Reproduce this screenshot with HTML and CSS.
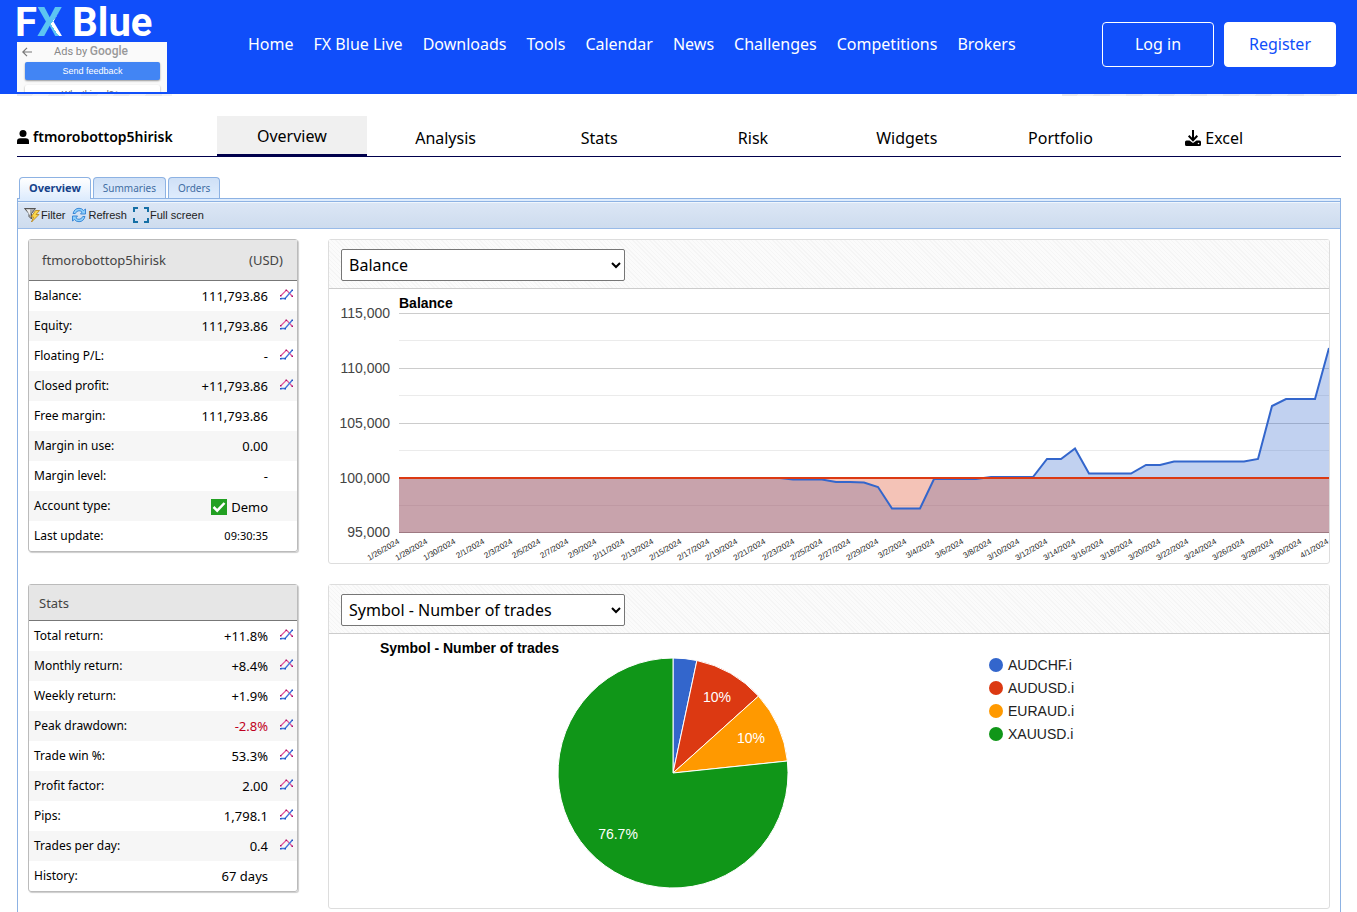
FILE: index.html
```html
<!DOCTYPE html>
<html lang="en">
<head>
<meta charset="utf-8">
<title>ftmorobottop5hirisk - FX Blue</title>
<link rel="stylesheet" href="styles.css">
</head>
<body>
<svg class="defs" aria-hidden="true">
  <symbol id="spark" viewBox="0 0 13 11">
    <path d="M1 6.500L6 1.500H7L12 7" fill="none" stroke="#e0559c" stroke-width="1.200"/>
    <path d="M1 9.500H5L12 1.500" fill="none" stroke="#3f74de" stroke-width="1.300"/>
    <path d="M0 6h1.500v1.500H0zM5.500 .5h1.500v1.500H5.500zM11.500 6.500h1.500v1.500h-1.500z" fill="#b0106a"/>
    <path d="M0 9h1.500v1.500H0zM4.500 9h1.500v1.500H4.500zM11.500 .5h1.500v1.500h-1.500z" fill="#1f4fc0"/>
  </symbol>
</svg>

<header class="site-header">
  <div class="brand">
    <a class="logo" href="#">F<span class="logo-x">X</span> Blue</a>
    <div class="ad">
      <div class="ad-head">
        <svg class="ad-back" viewBox="0 0 10 10" width="10" height="10"><path d="M10 5H1M5 .8L.8 5L5 9.200" fill="none" stroke="#777" stroke-width="1.200"/></svg>
        <span>Ads by <b>Google</b></span>
      </div>
      <button class="ad-send">Send feedback</button>
      <button class="ad-why">Why this ad? ▷</button>
    </div>
  </div>
  <nav class="main-nav">
    <a href="#">Home</a><a href="#">FX Blue Live</a><a href="#">Downloads</a><a href="#">Tools</a><a href="#">Calendar</a><a href="#">News</a><a href="#">Challenges</a><a href="#">Competitions</a><a href="#">Brokers</a>
  </nav>
  <div class="account">
    <a class="btn" href="#">Log in</a>
    <a class="btn btn-solid" href="#">Register</a>
  </div>
</header>
<div class="ad-edges"><span class="edge edge-left"></span><span class="edge edge-right"></span></div>

<main class="page">
  <div class="user-bar">
    <div class="user">
      <svg viewBox="0 0 12 14" width="12" height="14"><circle cx="6" cy="3.500" r="3.500"/><path d="M0 14v-2.500Q0 8.300 3.300 8.300H8.700Q12 8.300 12 11.500V14z"/></svg>
      <span>ftmorobottop5hirisk</span>
    </div>
    <nav class="sections">
      <a class="active" href="#">Overview</a><a href="#">Analysis</a><a href="#">Stats</a><a href="#">Risk</a><a href="#">Widgets</a><a href="#">Portfolio</a>
      <a href="#"><svg viewBox="0 0 16 16" width="16" height="16"><path d="M8 0V10M3.700 5.800L8 10.200L12.300 5.800" fill="none" stroke="#000" stroke-width="2"/><path d="M1.500 10.500H4.500L8 13L11.500 10.500H14.500Q16 10.500 16 12V14.500Q16 16 14.500 16H1.500Q0 16 0 14.500V12Q0 10.500 1.500 10.500z"/><circle cx="13.500" cy="13.500" r=".8" fill="#fff"/></svg> Excel</a>
    </nav>
  </div>

  <div class="tabs" role="tablist">
    <button class="tab tab-on" role="tab" aria-selected="true">Overview</button>
    <button class="tab" role="tab">Summaries</button>
    <button class="tab" role="tab">Orders</button>
  </div>
  <div class="frame">
    <div class="strip"></div>
    <div class="toolbar">
      <button class="tool"><svg viewBox="0 0 16 16" width="16" height="16"><path d="M.5 1.500H11.500L7.500 6.500V12L5 9.500V6.500z" fill="#aaa" stroke="#555"/><path d="M2.500 2.500H6L6 8.500z" fill="#eee"/><path d="M11.500 3.500H15.500L12 7.500H15L7.500 15L9.500 10H7z" fill="#fbd84b" stroke="#b27d12" stroke-width=".8"/></svg>Filter</button>
      <button class="tool"><svg viewBox="0 0 16 16" width="16" height="16"><g fill="#8fd0fb" stroke="#2f7fd2" stroke-width=".9"><path d="M2 6.500Q3.500 1.300 8 1.300Q11 1.300 12.500 3.500L14.500 2V7H9.500L11 5.200Q9.800 3.700 8 3.700Q5.500 3.700 4.300 6.500z"/><path d="M14 9.500Q12.500 14.700 8 14.700Q5 14.700 3.500 12.500L1.500 14V9H6.500L5 10.800Q6.200 12.300 8 12.300Q10.500 12.300 11.700 9.500z"/></g></svg>Refresh</button>
      <button class="tool"><svg viewBox="0 0 16 16" width="16" height="16"><path d="M1 5V1H5M11 1H15V5M15 11V15H11M5 15H1V11" fill="none" stroke="#156fa5" stroke-width="2"/></svg>Full screen</button>
    </div>
    <div class="content">
      <aside class="side">
        <section class="card">
          <h2 class="card-head card-head-account"><span>ftmorobottop5hirisk</span><span>(USD)</span></h2>
          <table class="facts">
            <tr><th scope="row">Balance:</th><td>111,793.86</td><td class="ic"><svg><use href="#spark"/></svg></td></tr>
            <tr><th scope="row">Equity:</th><td>111,793.86</td><td class="ic"><svg><use href="#spark"/></svg></td></tr>
            <tr><th scope="row">Floating P/L:</th><td>-</td><td class="ic"><svg><use href="#spark"/></svg></td></tr>
            <tr><th scope="row">Closed profit:</th><td>+11,793.86</td><td class="ic"><svg><use href="#spark"/></svg></td></tr>
            <tr><th scope="row">Free margin:</th><td>111,793.86</td><td class="ic"></td></tr>
            <tr><th scope="row">Margin in use:</th><td>0.00</td><td class="ic"></td></tr>
            <tr><th scope="row">Margin level:</th><td>-</td><td class="ic"></td></tr>
            <tr><th scope="row">Account type:</th><td><span class="verified"><svg viewBox="0 0 16 16" width="16" height="16"><path d="M0 0H16V16H0z" fill="#22a022"/><path d="M2.500 8L6.200 11.700L13.500 4" fill="none" stroke="#fff" stroke-width="2.500"/></svg>Demo</span></td><td class="ic"></td></tr>
            <tr><th scope="row">Last update:</th><td class="time">09:30:35</td><td class="ic"></td></tr>
          </table>
        </section>
        <section class="card">
          <h2 class="card-head">Stats</h2>
          <table class="facts">
            <tr><th scope="row">Total return:</th><td>+11.8%</td><td class="ic"><svg><use href="#spark"/></svg></td></tr>
            <tr><th scope="row">Monthly return:</th><td>+8.4%</td><td class="ic"><svg><use href="#spark"/></svg></td></tr>
            <tr><th scope="row">Weekly return:</th><td>+1.9%</td><td class="ic"><svg><use href="#spark"/></svg></td></tr>
            <tr><th scope="row">Peak drawdown:</th><td class="neg">-2.8%</td><td class="ic"><svg><use href="#spark"/></svg></td></tr>
            <tr><th scope="row">Trade win %:</th><td>53.3%</td><td class="ic"><svg><use href="#spark"/></svg></td></tr>
            <tr><th scope="row">Profit factor:</th><td>2.00</td><td class="ic"><svg><use href="#spark"/></svg></td></tr>
            <tr><th scope="row">Pips:</th><td>1,798.1</td><td class="ic"><svg><use href="#spark"/></svg></td></tr>
            <tr><th scope="row">Trades per day:</th><td>0.4</td><td class="ic"><svg><use href="#spark"/></svg></td></tr>
            <tr><th scope="row">History:</th><td>67 days</td><td class="ic"></td></tr>
          </table>
        </section>
      </aside>

      <div class="charts">
        <section class="panel">
          <div class="panel-head"><select aria-label="First chart"><option>Balance</option></select></div>
          <svg class="chart" viewBox="329 289 1000 274" role="img" aria-label="Balance">
            <text class="title" x="399" y="308">Balance</text>
            <g class="minor"><path d="M399 340.500H1329M399 395.500H1329M399 450.500H1329M399 505.500H1329"/></g>
            <g class="major"><path d="M399 313.500H1329M399 368.500H1329M399 423.500H1329M399 477.500H1329"/></g>
            <path d="M399 532.500H1329" stroke="#aaa"/>
            <path fill="#3366cc" fill-opacity=".3" d="M399 533V478H780L793 479.500H822L836 482H850L864 482.500L878 487L892 508.500H920L934 479H976L991 477H1033L1047 459H1061L1075 448.500L1089 473.500H1131L1146 465H1160L1174 461.500H1244L1258 459L1272 406L1286 399H1315L1329 348V533z"/>
            <path fill="#dc3912" fill-opacity=".3" d="M399 477.500H1329V533H399z"/>
            <path class="series" stroke="#3366cc" d="M399 478H780L793 479.500H822L836 482H850L864 482.500L878 487L892 508.500H920L934 479H976L991 477H1033L1047 459H1061L1075 448.500L1089 473.500H1131L1146 465H1160L1174 461.500H1244L1258 459L1272 406L1286 399H1315L1329 348"/>
            <path class="series" stroke="#dc3912" d="M399 478H1329"/>
            <g class="axis-y"><text x="390" y="318">115,000</text><text x="390" y="373">110,000</text><text x="390" y="428">105,000</text><text x="390" y="483">100,000</text><text x="390" y="537">95,000</text></g>
            <g class="axis-x">
              <text transform="translate(400 543) rotate(-30)">1/26/2024</text>
              <text transform="translate(428 543) rotate(-30)">1/28/2024</text>
              <text transform="translate(456 543) rotate(-30)">1/30/2024</text>
              <text transform="translate(485 543) rotate(-30)">2/1/2024</text>
              <text transform="translate(513 543) rotate(-30)">2/3/2024</text>
              <text transform="translate(541 543) rotate(-30)">2/5/2024</text>
              <text transform="translate(569 543) rotate(-30)">2/7/2024</text>
              <text transform="translate(597 543) rotate(-30)">2/9/2024</text>
              <text transform="translate(625 543) rotate(-30)">2/11/2024</text>
              <text transform="translate(654 543) rotate(-30)">2/13/2024</text>
              <text transform="translate(682 543) rotate(-30)">2/15/2024</text>
              <text transform="translate(710 543) rotate(-30)">2/17/2024</text>
              <text transform="translate(738 543) rotate(-30)">2/19/2024</text>
              <text transform="translate(766 543) rotate(-30)">2/21/2024</text>
              <text transform="translate(795 543) rotate(-30)">2/23/2024</text>
              <text transform="translate(823 543) rotate(-30)">2/25/2024</text>
              <text transform="translate(851 543) rotate(-30)">2/27/2024</text>
              <text transform="translate(879 543) rotate(-30)">2/29/2024</text>
              <text transform="translate(907 543) rotate(-30)">3/2/2024</text>
              <text transform="translate(935 543) rotate(-30)">3/4/2024</text>
              <text transform="translate(964 543) rotate(-30)">3/6/2024</text>
              <text transform="translate(992 543) rotate(-30)">3/8/2024</text>
              <text transform="translate(1020 543) rotate(-30)">3/10/2024</text>
              <text transform="translate(1048 543) rotate(-30)">3/12/2024</text>
              <text transform="translate(1076 543) rotate(-30)">3/14/2024</text>
              <text transform="translate(1104 543) rotate(-30)">3/16/2024</text>
              <text transform="translate(1133 543) rotate(-30)">3/18/2024</text>
              <text transform="translate(1161 543) rotate(-30)">3/20/2024</text>
              <text transform="translate(1189 543) rotate(-30)">3/22/2024</text>
              <text transform="translate(1217 543) rotate(-30)">3/24/2024</text>
              <text transform="translate(1245 543) rotate(-30)">3/26/2024</text>
              <text transform="translate(1274 543) rotate(-30)">3/28/2024</text>
              <text transform="translate(1302 543) rotate(-30)">3/30/2024</text>
              <text transform="translate(1329 543) rotate(-30)">4/1/2024</text>
            </g>
          </svg>
        </section>
        <section class="panel">
          <div class="panel-head"><select aria-label="Second chart"><option>Symbol - Number of trades</option></select></div>
          <svg class="chart" viewBox="329 634 1000 274" role="img" aria-label="Symbol - Number of trades">
            <text class="title" x="380" y="653">Symbol - Number of trades</text>
            <g stroke="#fff">
              <path fill="#3366cc" d="M673 773V658A115 115 0 0 1 696.900 660.500z"/>
              <path fill="#dc3912" d="M673 773L696.900 660.500A115 115 0 0 1 758.500 696.100z"/>
              <path fill="#ff9900" d="M673 773L758.500 696.100A115 115 0 0 1 787.400 761z"/>
              <path fill="#109618" d="M673 773L787.400 761A115 115 0 1 1 673 658z"/>
            </g>
            <g class="slice"><text x="717" y="702">10%</text><text x="751" y="743">10%</text><text x="618" y="839">76.7%</text></g>
            <circle cx="996" cy="665" r="7" fill="#3366cc"/><circle cx="996" cy="688" r="7" fill="#dc3912"/><circle cx="996" cy="711" r="7" fill="#ff9900"/><circle cx="996" cy="734" r="7" fill="#109618"/>
            <g class="legend"><text x="1008" y="670">AUDCHF.i</text><text x="1008" y="693">AUDUSD.i</text><text x="1008" y="716">EURAUD.i</text><text x="1008" y="739">XAUUSD.i</text></g>
          </svg>
        </section>
      </div>
    </div>
  </div>
</main>
</body>
</html>
```
FILE: styles.css
```css
* { box-sizing: border-box; }
body {
  margin: 0;
  min-height: 100vh;
  display: flex;
  flex-direction: column;
  font-family: "Noto Sans", sans-serif;
  font-size: 16px;
  color: #000;
  background: #fff;
}
a { color: inherit; text-decoration: none; }
button { font: inherit; border: 0; background: none; padding: 0; }
.defs { display: none; }

/* Header */
.site-header {
  height: 94px;
  padding: 0 21px 0 17px;
  display: flex;
  background: #104efa;
  color: #fff;
}
.brand { width: 150px; display: flex; flex-direction: column; }
.logo { margin-left: -2px; font: bold 40px/46px Roboto, sans-serif; height: 42px; white-space: nowrap; }
.logo-x {
  background: conic-gradient(from 35deg at 55% 54%, #fff 110deg, #5cc5f2 110deg);
  -webkit-background-clip: text;
  background-clip: text;
  color: transparent;
}
.ad {
  height: 50px;
  padding: 0 7px 0 8px;
  overflow: hidden;
  background: #fafafa;
  color: #888;
  font: 11px/18px Roboto, sans-serif;
}
.ad-head { display: flex; align-items: center; gap: 22px; margin-left: -3px; height: 19px; }
.ad-head b { font-weight: 500; color: #999; font-size: 12px; }
.ad-send, .ad-why {
  display: block;
  width: 100%;
  height: 18px;
  margin-top: 1px;
  border-radius: 2px;
  box-shadow: 0 1px 2px rgba(0, 0, 0, .4);
  font: 9px/18px "Liberation Sans", sans-serif;
}
.ad-send { background: #4285f4; color: #fff; }
.ad-why { margin-top: 5px; background: #fff; color: #666; }
.main-nav { display: flex; align-items: center; gap: 20px; margin-left: 81px; height: 88px; white-space: nowrap; }
.account { display: flex; gap: 10px; margin: 22px 0 0 auto; }
.btn {
  width: 112px;
  height: 45px;
  display: flex;
  align-items: center;
  justify-content: center;
  padding-bottom: 1px;
  border: 1px solid #fff;
  border-radius: 4px;
}
.btn-solid { background: #fff; color: #104efa; }
.ad-edges { display: flex; justify-content: space-between; height: 2px; padding: 0 17px; }
.edge { background: repeating-linear-gradient(120deg, #e8e8ec 0 14px, #f2f2f4 14px 28px); }
.edge-left { width: 155px; }
.edge-right { width: 278px; }

/* Account sections */
.page { flex: 1; display: flex; flex-direction: column; padding: 20px 16px 0 17px; }
.user-bar {
  display: grid;
  grid-template-columns: 200px 1fr 52px;
  height: 41px;
  border-bottom: 1px solid #00004c;
}
.user { display: flex; align-items: center; gap: 4px; font-size: 14px; font-weight: 600; }
.sections { display: flex; gap: 4px; height: 41px; }
.sections a { flex: 1; display: flex; align-items: center; justify-content: center; gap: 4px; padding-top: 3px; }
.sections .active { padding-top: 1px; background: #f0f0f0; border-bottom: 3px solid #00004c; }

/* Tab strip */
.tabs { display: flex; gap: 2px; padding: 20px 2px 0; }
.tab {
  height: 21px;
  padding: 0 9px;
  border: 1px solid #8db2e3;
  border-bottom: 0;
  border-radius: 4px 4px 0 0;
  background: linear-gradient(#cfe0f6, #dfecfd);
  color: #416da3;
  font-size: 10px;
  line-height: 20px;
}
.tab-on {
  position: relative;
  height: 22px;
  margin-bottom: -1px;
  padding-bottom: 1px;
  background: linear-gradient(#fff, #deecfd);
  color: #15428b;
  font-size: 11px;
  font-weight: bold;
}
.frame { flex: 1; border: 1px solid #8db2e3; border-bottom: 0; }
.strip { height: 3px; border-bottom: 1px solid #8db2e3; background: #deecfd; }
.toolbar {
  height: 27px;
  display: flex;
  align-items: center;
  gap: 6px;
  padding: 0 6px 2px;
  border-top: 1px solid #f0f6fd;
  border-bottom: 1px solid #99bbe8;
  background: linear-gradient(#dbe6f5, #cedcee);
}
.tool { display: flex; align-items: center; gap: 2px; font: 11px/16px "Liberation Sans", sans-serif; color: #222; }
.tool svg { margin-right: -1px; }

/* Cards */
.content { display: flex; gap: 30px; padding: 10px 10px 3px; }
.side { width: 270px; flex: none; display: flex; flex-direction: column; gap: 32px; }
.card { border: 1px solid #bbb; border-radius: 3px; box-shadow: 1px 1px 1px #ccc; }
.card-head {
  margin: 0;
  height: 36px;
  display: flex;
  align-items: center;
  justify-content: space-between;
  padding: 0 10px;
  background: #e6e6e6;
  border-bottom: 1px solid #777;
  color: #444;
  font-size: 13px;
  font-weight: normal;
}
.card-head-account { height: 41px; padding: 0 14px 1px 13px; }
.facts { width: 100%; border-collapse: collapse; }
.facts tr { height: 30px; }
.facts tr:nth-child(even) { background: #f6f6f6; }
.facts th { padding: 0 0 2px 5px; font-size: 12px; font-weight: normal; text-align: left; }
.facts td { padding: 0; font-size: 13px; text-align: right; }
.facts .ic { width: 29px; padding: 0 4px 0 0; line-height: 0; }
.ic svg { width: 13px; height: 11px; margin-bottom: 3px; }
.facts .time { font-size: 11px; padding-bottom: 1px; }
.facts .neg { color: #c00020; }
.verified { display: inline-flex; align-items: center; gap: 4px; vertical-align: middle; }

/* Charts */
.charts { flex: 1; min-width: 0; display: flex; flex-direction: column; gap: 20px; }
.panel { border: 1px solid #ddd; border-radius: 3px; }
.panel-head {
  height: 49px;
  padding: 9px 12px;
  border-bottom: 1px solid #ccc;
  background: repeating-linear-gradient(45deg, #fbfbfb 0 2px, #f5f5f5 2px 3px);
}
.panel-head select {
  width: 284px;
  height: 32px;
  padding: 0 3px;
  border: 1px solid #767676;
  border-radius: 2px;
  background-color: #fff;
  color: #000;
  font: 16px "Noto Sans", sans-serif;
}
.chart { display: block; width: 100%; height: auto; font: 14px "Liberation Sans", sans-serif; }
.title { font-weight: bold; }
.major { stroke: #ccc; }
.minor { stroke: #ebebeb; }
.series { fill: none; stroke-width: 2; }
.axis-y { fill: #444; text-anchor: end; }
.axis-x { fill: #222; text-anchor: end; font-size: 8px; }
.slice { fill: #fff; text-anchor: middle; }
.legend { fill: #222; }
```
